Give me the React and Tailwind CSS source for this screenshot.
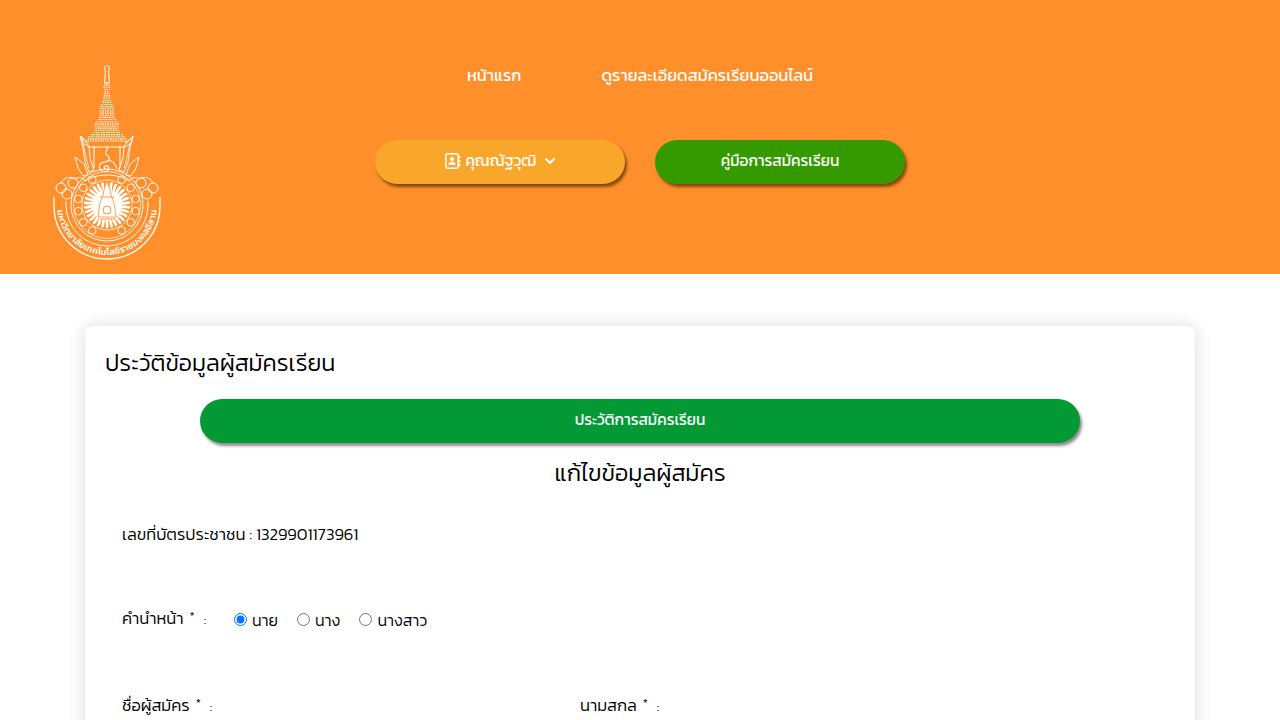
import { ChevronDown } from "lucide-react";

const thaiFont = "font-['Kanit','Noto_Sans_Thai','Noto_Sans','DejaVu_Sans',sans-serif]";

// width of the spire at a given height, from the picture
const spire = [
  [18, 1.5], [22, 4], [26, 2.4], [31, 3.2], [37, 4.5], [43, 7.5], [47, 7], [51, 7], [56, 10], [60, 13], [64, 11], [68, 14], [72, 19], [78, 20],
];

function spireWidth(y) {
  for (let i = 1; i < spire.length; i++) {
    if (y <= spire[i][0]) {
      const [y0, w0] = spire[i - 1];
      const [y1, w1] = spire[i];
      return w0 + ((w1 - w0) * (y - y0)) / (y1 - y0);
    }
  }
  return 20;
}

function Logo() {
  const rows = Array.from({ length: 28 }, (_, i) => 18 + i * 2.15);
  const rays = Array.from({ length: 30 }, (_, i) => (i * 360) / 30);
  const knots = [-60, -36, -12, 12, 36, 60, 120, 144, 168, 192, 216, 240];
  return (
    <svg viewBox="0 0 108 196" className="w-[108px] h-[196px]" fill="none" stroke="#fff">
      {/* spire */}
      <path d="M54 0c2.4 1 3 3 1.6 6l.8 12h-4.8l.8-12c-1.4-3-.8-5 1.6-6z" strokeWidth="1" />
      {rows.map((y) => (
        <path key={y} d={`M${54 - spireWidth(y)} ${y}H${54 + spireWidth(y)}`} strokeWidth="1.1" strokeDasharray="1.6 0.9" />
      ))}
      <path d="M36 78l-4-3-4-4 2 7 6 4h36l6-4 2-7-4 4-4 3" strokeWidth="1" />
      {/* frame below the roof and the unalom */}
      <path d="M41 81v22M67 81v22" strokeWidth="1" />
      <path d="M54 82c2 3-3 4-1 7s5 3 3 6c-2 3-6 1-9 4-2 4 1 8 5 8 4-1 5-5 2-6-3-1-4 3-1 3M55 95c5 1 8 4 9 9" strokeWidth="1.1" />
      {/* flanking flames */}
      <path d="M27 71l9 10 1 12 4 12-5 2-4-10-2-14z" strokeWidth="0.9" />
      <path d="M80 71l-9 10-1 12-4 12 5 2 4-10 2-14z" strokeWidth="0.9" />
      <path d="M30 78l3 14 3 11M77 78l-3 14-3 11" strokeWidth="0.7" />
      <path d="M22 92l9 7 4 11-5 1-5-8zM86 92l-9 7-4 11 5 1 5-8z" strokeWidth="0.9" />
      {/* shield rim */}
      <path d="M1 132v9a53 53 0 0 0 106 0v-9" strokeWidth="1.3" />
      <path d="M13 136v4a41 41 0 0 0 82 0v-4" strokeWidth="0.9" />
      <path d="M8 118c3-6 10-7 14-4 4-3 8-1 10 2 6-4 14-6 22-6s16 2 22 6c2-3 6-5 10-2 4-3 11-2 14 4" strokeWidth="1" />
      <circle cx="54" cy="140" r="36" strokeWidth="0.9" />
      <circle cx="54" cy="140" r="33.5" strokeWidth="0.7" />
      <circle cx="54" cy="140" r="25" strokeWidth="0.8" />
      {/* ring of knots */}
      {knots.map((a) => {
        const r = (a * Math.PI) / 180;
        return <circle key={a} cx={54 + 29.3 * Math.cos(r)} cy={140 + 29.3 * Math.sin(r)} r="3.8" strokeWidth="0.9" />;
      })}
      {[[8, 123], [100, 123], [14, 129], [94, 129], [20, 118], [88, 118]].map(([x, y]) => (
        <circle key={x} cx={x} cy={y} r="5" strokeWidth="1" />
      ))}
      {/* sun wheel */}
      <circle cx="54" cy="140" r="15" fill="#fff" stroke="none" />
      {rays.map((a) => (
        <path key={a} d="M54 127c1.5-3-1-5 0-9" strokeWidth="2.7" strokeLinecap="round" transform={`rotate(${a} 54 140)`} />
      ))}
      <path d="M54 116l3 9 1 5 3 8 2 14H45l2-14 3-8 1-5z" fill="#fff" stroke="#FF8F2B" strokeWidth="0.8" />
      <circle cx="54" cy="145" r="4" stroke="#FF8F2B" strokeWidth="0.9" />
      <path d="M47 132h14M47 154h14" stroke="#FF8F2B" strokeWidth="0.9" />
      {/* university name on the rim */}
      <path id="logo-rim" d="M4 140a50 50 0 0 0 100 0" stroke="none" />
      <text fill="#fff" stroke="none" fontSize="9" fontWeight="500">
        <textPath href="#logo-rim" startOffset="50%" textAnchor="middle" textLength="146">
          มหาวิทยาลัยเทคโนโลยีราชมงคลอีสาน
        </textPath>
      </text>
    </svg>
  );
}

function ContactIcon() {
  return (
    <svg viewBox="0 0 16 16" className="w-[16px] h-[16px]" fill="none" stroke="#fff">
      <rect x="0.8" y="0.8" width="12.4" height="14.4" rx="1.6" strokeWidth="1.5" />
      <circle cx="7" cy="6" r="2.1" fill="#fff" stroke="none" />
      <path d="M3.4 12c0-2.4 1.6-3.3 3.6-3.3s3.6.9 3.6 3.3z" fill="#fff" stroke="none" />
      <path d="M14.6 3v2.2M14.6 7v2.2M14.6 11v2.2" strokeWidth="1.5" />
    </svg>
  );
}

function Radio({ label, checked }) {
  return (
    <label className="flex items-center gap-[5px]">
      <input type="radio" name="prefix" defaultChecked={checked} className="w-[13px] h-[13px] m-0 accent-[#0075ff]" />
      <span className="text-[16px]">{label}</span>
    </label>
  );
}

function Required({ label }) {
  return (
    <span className="flex items-baseline">
      <span>{label}</span>
      <span className="ml-[6px] text-[12px] relative top-[-4px]">*</span>
      <span className="ml-[9px] text-[14px]">:</span>
    </span>
  );
}

export default function App() {
  return (
    <div className={`${thaiFont} bg-white text-black font-light`}>
      <header className="h-[274px] bg-[#ff8f2b] grid grid-cols-[1fr_530px_1fr]">
        <div className="pl-[53px] pt-[65px]">
          <Logo />
        </div>
        <div className="flex flex-col items-center text-white">
          <nav className="flex gap-[80px] mt-[62px] text-[16.5px] leading-[27px] font-normal">
            <a>หน้าแรก</a>
            <a>ดูรายละเอียดสมัครเรียนออนไลน์</a>
          </nav>
          <div className="flex gap-[30px] mt-[51px] text-[15.4px] font-normal">
            <button className="w-[250px] h-[44px] pb-[3px] pl-[3px] rounded-[22px] bg-[#f9a72b] shadow-[2px_3px_3px_rgba(90,50,0,0.75)] flex items-center justify-center">
              <ContactIcon />
              <span className="ml-[4px]">คุณณัฐวุฒิ</span>
              <ChevronDown className="ml-[5px] w-[16px] h-[16px]" strokeWidth={3} />
            </button>
            <button className="w-[250px] h-[44px] pb-[3px] rounded-[22px] bg-[#359a00] shadow-[2px_3px_3px_rgba(90,50,0,0.75)]">
              คู่มือการสมัครเรียน
            </button>
          </div>
        </div>
        <div />
      </header>

      <main className="pt-[52px] pb-[60px] px-[85px]">
        <section className="rounded-[8px] shadow-[0_0_18px_rgba(0,0,0,0.14)] px-[20px] pt-[19px] pb-[60px]">
          <h2 className="text-[23.4px] leading-[36px]">ประวัติข้อมูลผู้สมัครเรียน</h2>
          <button className="block mx-auto mt-[18px] w-[880px] h-[44px] pb-[2px] rounded-[22px] bg-[#039a36] text-white text-[15.4px] font-normal shadow-[2px_3px_3px_rgba(0,0,0,0.45)]">
            ประวัติการสมัครเรียน
          </button>
          <h2 className="mt-[12px] text-center text-[23.6px] leading-[36px]">แก้ไขข้อมูลผู้สมัคร</h2>

          <div className="px-[17px] text-[16.6px] leading-[26px]">
            <p className="mt-[31px]">เลขที่บัตรประชาชน : 1329901173961</p>
            <div className="mt-[58px] flex items-center">
              <span className="w-[112px]"><Required label="คำนำหน้า" /></span>
              <div className="flex gap-[19px]">
                <Radio label="นาย" checked />
                <Radio label="นาง" />
                <Radio label="นางสาว" />
              </div>
            </div>
            <div className="mt-[60px] grid grid-cols-[458px_1fr]">
              <Required label="ชื่อผู้สมัคร" />
              <Required label="นามสกล" />
            </div>
          </div>
        </section>
      </main>
    </div>
  );
}
